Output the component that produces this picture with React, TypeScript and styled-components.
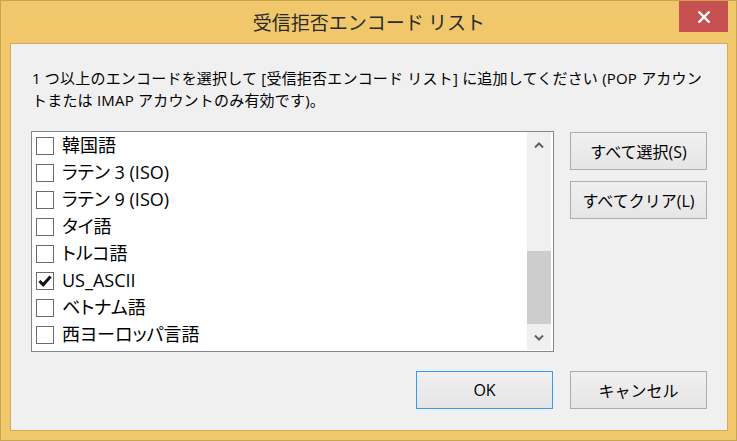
import React from 'react'
import styled, { createGlobalStyle } from 'styled-components'

const GlobalStyle = createGlobalStyle`
  html, body {
    margin: 0;
    padding: 0;
    background: #ffffff;
  }
  body {
    font-family: "Open Sans", "Noto Sans CJK JP", sans-serif;
    color: #000;
  }
  * {
    box-sizing: border-box;
  }
`

const encodings = [
  { label: '韓国語', checked: false },
  { label: 'ラテン 3 (ISO)', checked: false },
  { label: 'ラテン 9 (ISO)', checked: false },
  { label: 'タイ語', checked: false },
  { label: 'トルコ語', checked: false },
  { label: 'US_ASCII', checked: true },
  { label: 'ベトナム語', checked: false },
  { label: '西ヨーロッパ言語', checked: false },
]

export default function App() {
  return (
    <>
      <GlobalStyle />
      <Window>
        <TitleBar>
          <span />
          <Title>受信拒否エンコード リスト</Title>
          <CloseButton aria-label="閉じる">
            <svg width="14" height="12" viewBox="0 0 14 12">
              <path d="M1.5 0.5 L12.5 11.5 M12.5 0.5 L1.5 11.5" stroke="#fff" strokeWidth="2.4" />
            </svg>
          </CloseButton>
        </TitleBar>

        <Panel>
          <Description>
            <Line>1 つ以上のエンコードを選択して [受信拒否エンコード リスト] に追加してください (POP アカウン</Line>
            <Line>トまたは IMAP アカウントのみ有効です)。</Line>
          </Description>

          <MainRow>
            <ListBox>
              <ItemList>
                {encodings.map(item => (
                  <Row key={item.label}>
                    <CheckBox>
                      {item.checked && (
                        <svg width="16" height="16" viewBox="0 0 16 16">
                          <path
                            d="M2.5 8 L6.2 11.8 L13.5 3.5"
                            fill="none"
                            stroke="#111"
                            strokeWidth="3"
                          />
                        </svg>
                      )}
                    </CheckBox>
                    <Label>{item.label}</Label>
                  </Row>
                ))}
              </ItemList>
              <ScrollBar>
                <ArrowButton>
                  <svg width="10" height="6" viewBox="0 0 10 6">
                    <path d="M1 5.5 L5 1.5 L9 5.5" fill="none" stroke="#606060" strokeWidth="2" />
                  </svg>
                </ArrowButton>
                <Track>
                  <Thumb $offset={94} $size={73} />
                </Track>
                <ArrowButton>
                  <svg width="10" height="6" viewBox="0 0 10 6">
                    <path d="M1 0.5 L5 4.5 L9 0.5" fill="none" stroke="#606060" strokeWidth="2" />
                  </svg>
                </ArrowButton>
              </ScrollBar>
            </ListBox>

            <SideButtons>
              <Button>すべて選択(S)</Button>
              <Button>すべてクリア(L)</Button>
            </SideButtons>
          </MainRow>

          <Footer>
            <Button $primary>OK</Button>
            <Button>キャンセル</Button>
          </Footer>
        </Panel>
      </Window>
    </>
  )
}

const Window = styled.div`
  width: 737px;
  height: 441px;
  display: flex;
  flex-direction: column;
  border: 1px solid #c9a450;
  background: #f0c86b;
  padding: 0 8px 9px 9px;
`

const TitleBar = styled.div`
  height: 42px;
  display: grid;
  grid-template-columns: 1fr auto 1fr;
  align-items: start;
`

const Title = styled.div`
  align-self: center;
  font-family: "Noto Sans CJK JP", sans-serif;
  font-size: 19px;
  line-height: 26px;
  color: #2a2a2a;
  white-space: nowrap;
`

const CloseButton = styled.div`
  justify-self: end;
  width: 49px;
  height: 31px;
  background: #c75050;
  display: flex;
  align-items: center;
  justify-content: center;
`

const Panel = styled.div`
  flex: 1;
  display: flex;
  flex-direction: column;
  border: 1px solid #d0ac5c;
  background: #f0f0f0;
  padding: 23px 20px 21px 20px;
`

const Description = styled.div`
  font-size: 15px;
  line-height: 22px;
  letter-spacing: 0.2px;
  color: #000;
  padding-left: 1px;
`

const Line = styled.div`
  white-space: nowrap;
`

const MainRow = styled.div`
  margin-top: 20px;
  display: flex;
  align-items: flex-start;
  gap: 16px;
`

const ListBox = styled.div`
  width: 523px;
  height: 221px;
  display: flex;
  border: 1px solid #828790;
  background: #ffffff;
`

const ItemList = styled.div`
  flex: 1;
  overflow: hidden;
  padding-left: 4px;
`

const Row = styled.div`
  height: 27px;
  display: flex;
  align-items: center;
  gap: 8px;
`

const CheckBox = styled.div`
  width: 18px;
  height: 18px;
  border: 1px solid #6a6a6a;
  background: #ffffff;
  display: flex;
  align-items: center;
  justify-content: center;
`

const Label = styled.span`
  font-size: 18px;
  line-height: 27px;
  font-feature-settings: "palt";
  white-space: nowrap;
`

const ScrollBar = styled.div`
  width: 24px;
  margin: 0 2px 1px 0;
  background: #f0f0f0;
  display: flex;
  flex-direction: column;
`

const ArrowButton = styled.div`
  height: 25px;
  display: flex;
  align-items: center;
  justify-content: center;
`

const Track = styled.div`
  flex: 1;
  display: flex;
  flex-direction: column;
`

const Thumb = styled.div<{ $offset: number; $size: number }>`
  margin-top: ${p => p.$offset}px;
  height: ${p => p.$size}px;
  background: #cdcdcd;
`

const SideButtons = styled.div`
  margin-top: 1px;
  display: flex;
  flex-direction: column;
  gap: 11px;
`

const Button = styled.div<{ $primary?: boolean }>`
  width: 137px;
  height: 38px;
  display: flex;
  align-items: center;
  justify-content: center;
  border: 1px solid ${p => (p.$primary ? '#3399ff' : '#adadad')};
  background: linear-gradient(#f0f0f0, #e5e5e5);
  font-size: 16px;
  color: #000;
  white-space: nowrap;
`

const Footer = styled.div`
  margin-top: auto;
  display: flex;
  justify-content: flex-end;
  gap: 17px;
`
